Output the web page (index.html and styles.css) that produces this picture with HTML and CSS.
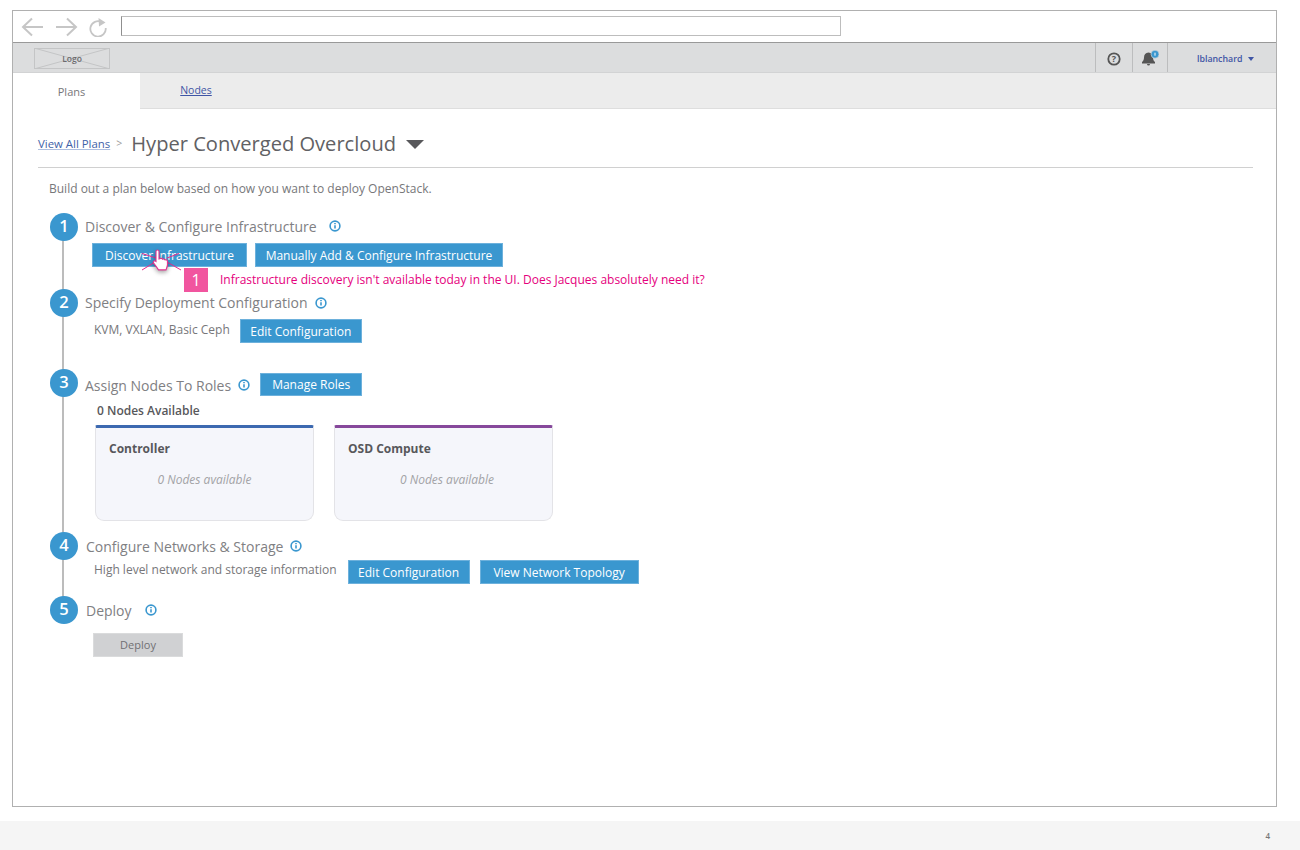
FILE: index.html
```html
<!DOCTYPE html>
<html lang="en">
<head>
<meta charset="utf-8">
<title>Hyper Converged Overcloud</title>
<link rel="stylesheet" href="styles.css">
</head>
<body>
<div class="frame">
  <div class="chrome">
    <svg class="nav-icon" width="24" height="20" viewBox="0 0 24 20"><path d="M22 10H2M11 1.500L2 10l9 8.500" /></svg>
    <svg class="nav-icon fwd" width="24" height="20" viewBox="0 0 24 20"><path d="M2 10h20M13 1.500l9 8.500-9 8.500" /></svg>
    <svg class="nav-icon reload" width="20" height="20" viewBox="0 0 20 20"><path d="M14.500 5A7.700 7.700 0 1 0 18.700 11" /><path class="solid" d="M11.500 1l7 4.500-6.500 4z" /></svg>
    <div class="address"></div>
  </div>
  <header class="masthead">
    <div class="logo">
      <svg class="logo-x" width="76" height="21" viewBox="0 0 76 21"><path d="M0 0L76 21M76 0L0 21" /></svg>
      <span class="logo-text">Logo</span>
    </div>
    <div class="util">
      <div class="cell help">
        <svg width="14" height="14" viewBox="0 0 14 14"><circle cx="7" cy="7" r="5.700" class="help-ring"/><text x="7" y="10.200" class="help-mark">?</text></svg>
      </div>
      <div class="cell bell">
        <svg width="18" height="18" viewBox="0 0 18 18"><path class="bell-body" d="M7.500 2.500c-3 0-4.500 2.200-4.500 5 0 2-.8 3.500-2 4.500v1.500h13V12c-1.200-1-2-2.500-2-4.500 0-2.800-1.500-5-4.500-5zM6 14h3a1.500 1.500 0 0 1-3 0z"/><circle cx="14" cy="4.200" r="4" class="bell-dot"/><path d="M14 2.700v3" class="bell-num"/></svg>
      </div>
      <div class="cell user"><span class="user-name">lblanchard</span><span class="caret-small"></span></div>
    </div>
  </header>
  <nav class="tabs">
    <div class="tab active">Plans</div>
    <a class="tab link" href="#">Nodes</a>
  </nav>
  <main class="content">
    <div class="crumbs">
      <a class="crumb" href="#">View All Plans</a>
      <span class="sep">&gt;</span>
      <h1 class="title">Hyper Converged Overcloud</h1>
      <span class="caret-large"></span>
    </div>
    <p class="intro">Build out a plan below based on how you want to deploy OpenStack.</p>
    <div class="steps">
      <div class="rail"></div>

      <section class="step s1">
        <div class="head"><span class="num">1</span><h2 class="label">Discover &amp; Configure Infrastructure</h2>
          <svg class="info gap-wide" width="12" height="12" viewBox="0 0 12 12"><circle cx="6" cy="6" r="4.900"/><path d="M6 5.300v3.200M6 2.900v1.400"/></svg></div>
        <div class="row indent-btn">
          <button class="btn w-discover">Discover Infrastructure</button>
          <button class="btn w-manual">Manually Add &amp; Configure Infrastructure</button>
        </div>
        <svg class="pointer" width="42" height="28" viewBox="0 0 42 28">
          <path class="burst" d="M2 4.500l14 4.500M2 21l13-8M39 4.500l-12 4.500M41 21l-14-8"/>
          <path class="hand" d="M16 2.500c0-2 3-2 3 0V10l1.500-.5c1-.3 2 .3 2.200.8 1-.5 2-.2 2.300.6 1-.4 2.200 0 2.400 1 .5 3 .2 6-1.400 9h-7.500c-1.500-2.500-3.500-5-5-7-.8-1.500 1-2.800 2.500-1.500z"/>
        </svg>
        <div class="note"><span class="note-num">1</span><span class="note-text">Infrastructure discovery isn't available today in the UI. Does Jacques absolutely need it?</span></div>
      </section>

      <section class="step s2">
        <div class="head"><span class="num">2</span><h2 class="label">Specify Deployment Configuration</h2>
          <svg class="info" width="12" height="12" viewBox="0 0 12 12"><circle cx="6" cy="6" r="4.900"/><path d="M6 5.300v3.200M6 2.900v1.400"/></svg></div>
        <div class="row detail">
          <span class="desc">KVM, VXLAN, Basic Ceph</span>
          <button class="btn w-edit">Edit Configuration</button>
        </div>
      </section>

      <section class="step s3">
        <div class="head"><span class="num">3</span><h2 class="label low">Assign Nodes To Roles</h2>
          <svg class="info low-icon" width="12" height="12" viewBox="0 0 12 12"><circle cx="6" cy="6" r="4.900"/><path d="M6 5.300v3.200M6 2.900v1.400"/></svg>
          <button class="btn w-roles">Manage Roles</button></div>
        <div class="avail">0 Nodes Available</div>
        <div class="cards">
          <article class="card blue"><h3 class="card-title">Controller</h3><p class="card-empty">0 Nodes available</p></article>
          <article class="card purple"><h3 class="card-title">OSD Compute</h3><p class="card-empty">0 Nodes available</p></article>
        </div>
      </section>

      <section class="step s4">
        <div class="head"><span class="num">4</span><h2 class="label shift">Configure Networks &amp; Storage</h2>
          <svg class="info" width="12" height="12" viewBox="0 0 12 12"><circle cx="6" cy="6" r="4.900"/><path d="M6 5.300v3.200M6 2.900v1.400"/></svg></div>
        <div class="row detail tight">
          <span class="desc">High level network and storage information</span>
          <button class="btn w-edit2">Edit Configuration</button>
          <button class="btn w-topo">View Network Topology</button>
        </div>
      </section>

      <section class="step s5">
        <div class="head"><span class="num">5</span><h2 class="label shift">Deploy</h2>
          <svg class="info gap-mid" width="12" height="12" viewBox="0 0 12 12"><circle cx="6" cy="6" r="4.900"/><path d="M6 5.300v3.200M6 2.900v1.400"/></svg></div>
        <button class="btn-off">Deploy</button>
      </section>
    </div>
  </main>
</div>
<footer class="footer"><span class="page-no">4</span></footer>
</body>
</html>
```

FILE: styles.css
```css
* { box-sizing: border-box; }
html, body { margin: 0; padding: 0; }
body {
  width: 1300px;
  height: 850px;
  overflow: hidden;
  background: #fff;
  font-family: "Open Sans", "Liberation Sans", sans-serif;
  color: #77777a;
  padding-top: 10px;
}
.frame {
  width: 1265px;
  height: 797px;
  margin-left: 12px;
  border: 1px solid #b0b0b0;
  display: flex;
  flex-direction: column;
}
.chrome {
  height: 31px;
  display: flex;
  align-items: center;
  padding-left: 8px;
  background: #fff;
  flex: none;
}
.nav-icon { fill: none; stroke: #c6c6c6; stroke-width: 2; margin-right: 9px; flex: none; }
.nav-icon.reload { margin-right: 14px; stroke-width: 1.800; }
.nav-icon .solid { fill: #c6c6c6; stroke: none; }
.address {
  width: 720px;
  height: 20px;
  margin-top: -2px;
  border: 1px solid #bdbdbd;
  border-left-color: #8f8f8f;
}
.masthead {
  height: 31px;
  flex: none;
  background: #dcddde;
  border-top: 1px solid #999;
  border-bottom: 1px solid #d2d3d4;
  display: flex;
  justify-content: space-between;
  padding-left: 21px;
}
.logo {
  position: relative;
  width: 76px;
  height: 21px;
  margin-top: 5px;
  border: 1px solid #c4c5c6;
  display: flex;
  align-items: center;
  justify-content: center;
}
.logo-x { position: absolute; left: -1px; top: -1px; fill: none; stroke: #c4c5c6; stroke-width: 1; }
.logo-text { position: relative; font-size: 8.500px; font-weight: 600; color: #6b6b6e; }
.util { display: flex; }
.cell {
  border-left: 1px solid #bcbdbe;
  display: flex;
  align-items: center;
  justify-content: center;
  padding-top: 2px;
}
.help { width: 37px; }
.bell { width: 35px; }
.user { width: 109px; gap: 6px; justify-content: flex-start; padding-left: 29px; }
.help-ring { fill: none; stroke: #555; stroke-width: 1.800; }
.help-mark { font-size: 9px; font-weight: 700; fill: #555; text-anchor: middle; font-family: "Open Sans", sans-serif; }
.bell-body { fill: #555; }
.bell-dot { fill: #3a97cf; stroke: #dcddde; stroke-width: .6; }
.bell-num { stroke: #fff; stroke-width: 1; fill: none; }
.user-name { font-size: 8.800px; font-weight: 600; color: #3f55a5; }
.caret-small {
  width: 0; height: 0;
  border-left: 3.500px solid transparent;
  border-right: 3.500px solid transparent;
  border-top: 4px solid #3f55a5;
}
.tabs {
  height: 36px;
  flex: none;
  background: #ececec;
  border-bottom: 1px solid #dedede;
  display: flex;
}
.tab { width: 127px; font-size: 11px; display: flex; align-items: center; justify-content: center; }
.tab.active { background: #fff; height: 36px; color: #77777a; padding: 0 10px 0 0; }
.tab.link { width: 112px; color: #3f55a5; text-decoration: underline; font-size: 10.500px; padding-bottom: 2px; }
.content { flex: 1; padding: 0 23px 0 25px; min-height: 0; }
.crumbs {
  height: 59px;
  padding-top: 21px;
  display: flex;
  align-items: center;
  border-bottom: 1px solid #d0d0d0;
  padding-bottom: 9px;
}
.crumb { font-size: 11.400px; color: #3f62a8; text-decoration: underline; text-decoration-color: #aebfe0; margin-bottom: 2px; }
.sep { font-size: 10.500px; color: #9a9a9a; margin: 0 9px 2px 6px; }
.title { margin: 0; font-size: 20.100px; font-weight: 400; color: #616164; line-height: 28px; }
.caret-large {
  width: 0; height: 0;
  margin-left: 10px;
  border-left: 9.500px solid transparent;
  border-right: 9.500px solid transparent;
  border-top: 9px solid #58585b;
}
.intro { margin: 13px 0 0 11px; font-size: 12px; line-height: 16px; color: #77777a; }
.steps { position: relative; margin: 16px 0 0 12px; }
.rail { position: absolute; left: 12px; top: 14px; width: 2px; height: 385px; background: #bcbcbc; }
.step { position: relative; }
.head { display: flex; align-items: center; height: 28px; }
.num {
  width: 28px; height: 28px; flex: none;
  border-radius: 50%;
  background: #3a97cf;
  color: #fff;
  font-size: 16.500px;
  font-weight: 600;
  display: flex; align-items: center; justify-content: center;
  padding-bottom: 3px;
  margin-right: 7px;
}
.label { margin: 0; font-size: 14px; font-weight: 400; color: #808083; white-space: nowrap; }
.s1 .label, .s2 .label { position: relative; top: -1px; }
.label.low { position: relative; top: 4px; }
.label.shift { margin-left: 1px; }
.info { fill: none; stroke: #3a97cf; stroke-width: 1.600; margin-left: 7px; flex: none; }
.info.gap-wide { margin-left: 12px; margin-top: -2px; }
.info.gap-mid { margin-left: 13px; }
.info.low-icon { margin-top: -1px; }
.row { display: flex; align-items: center; }
.indent-btn { margin: 2px 0 0 42px; gap: 8px; }
.btn {
  height: 24px;
  padding: 0;
  border: 1px solid #6db1dc;
  background: #3a97cf;
  color: #fff;
  font-family: inherit;
  font-size: 12px;
  flex: none;
}
.w-discover { width: 155px; }
.w-manual { width: 248px; }
.w-edit { width: 122px; }
.w-edit2 { width: 122px; margin-left: 1px; }
.w-topo { width: 159px; }
.w-roles { width: 102px; margin-left: 10px; }
.pointer { position: absolute; left: 90px; top: 36px; overflow: visible; }
.burst { fill: none; stroke: #ea2a8c; stroke-width: 1; }
.hand { fill: #fff; stroke: #e0338e; stroke-width: 1.100; filter: drop-shadow(0 2px 2px rgba(0, 0, 0, .35)); }
.note { position: absolute; left: 134px; top: 55px; display: flex; align-items: center; }
.note-num {
  width: 24px; height: 24px;
  background: #f1559f;
  color: #fff;
  font-size: 16px;
  display: flex; align-items: center; justify-content: center;
  margin-right: 12px;
}
.note-text { font-size: 12px; color: #e5007d; white-space: nowrap; position: relative; top: -1px; }
.s2 { margin-top: 22px; }
.detail { margin: 2px 0 0 44px; gap: 10px; }
.desc { font-size: 12px; color: #77777a; position: relative; top: -2px; white-space: nowrap; }
.s3 { margin-top: 26px; }
.s3 .head { align-items: flex-start; }
.s3 .label { top: 7px; }
.s3 .info { margin-top: 10px; }
.s3 .btn { margin-top: 4px; height: 23px; }
.avail { margin: 6px 0 0 47px; font-size: 12px; font-weight: 600; color: #58585b; line-height: 16px; }
.cards { display: flex; gap: 20px; margin: 6px 0 0 45px; }
.card {
  width: 219px; height: 96px;
  background: #f5f6fb;
  border: 1px solid #e3e3e7;
  border-top: 3px solid;
  border-radius: 2px 2px 9px 9px;
  padding: 13px 13px;
}
.card.blue { border-top-color: #3c69b0; }
.card.purple { border-top-color: #86489b; }
.card-title { margin: 0; font-size: 12px; font-weight: 700; color: #58585b; line-height: 16px; }
.card-empty { margin: 15px 0 0; font-size: 12px; font-style: italic; color: #a3a3a6; text-align: center; line-height: 16px; }
.purple .card-empty { padding-left: 7px; }
.s4 { margin-top: 11px; }
.detail.tight { margin-top: 0; }
.s4 .desc { top: -3px; }
.s5 { margin-top: 12px; }
.btn-off {
  display: block;
  width: 90px; height: 24px;
  margin: 9px 0 0 43px;
  padding: 0 0 1px;
  border: 1px solid #dadbdc;
  background: #d0d1d3;
  color: #707073;
  font-family: inherit;
  font-size: 11px;
}
.footer {
  margin-top: 14px;
  height: 29px;
  background: #f5f5f5;
  display: flex;
  justify-content: flex-end;
  align-items: center;
  padding-right: 30px;
}
.page-no { font-size: 8px; font-weight: 600; color: #777; }
```
